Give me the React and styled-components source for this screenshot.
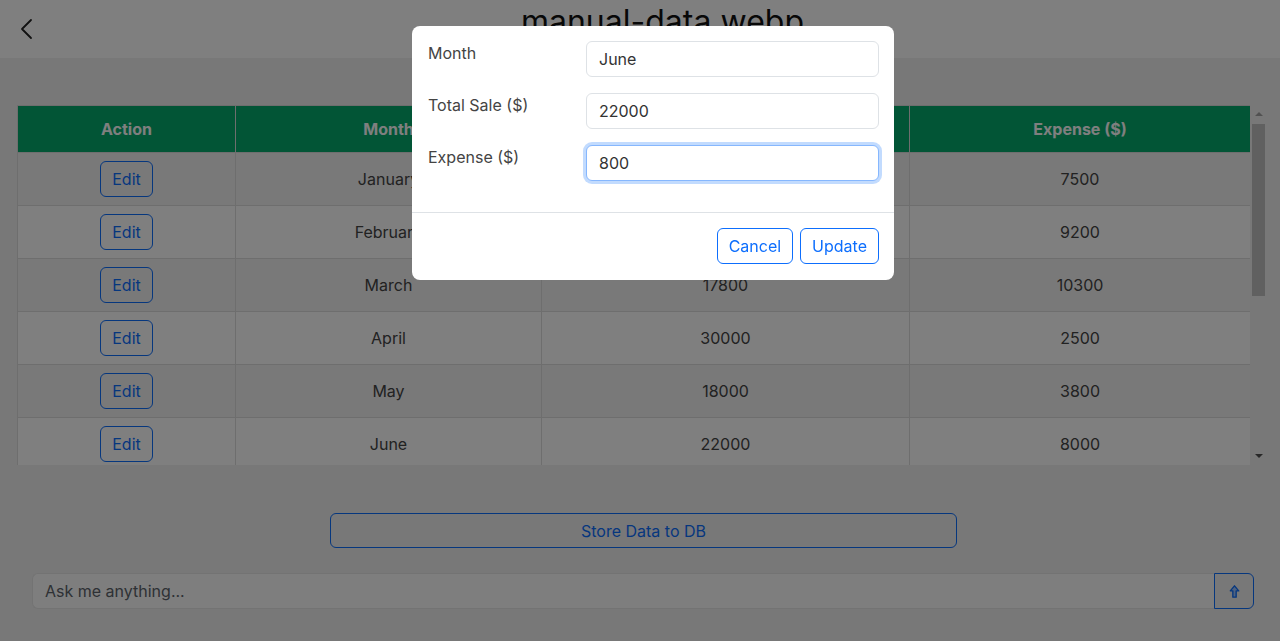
import { useEffect, useRef } from "react";
import styled, { createGlobalStyle } from "styled-components";

const rows = [
  { month: "January", sale: 15000, expense: 7500 },
  { month: "February", sale: 21000, expense: 9200 },
  { month: "March", sale: 17800, expense: 10300 },
  { month: "April", sale: 30000, expense: 2500 },
  { month: "May", sale: 18000, expense: 3800 },
  { month: "June", sale: 22000, expense: 8000 },
  { month: "July", sale: 25000, expense: 6000 },
  { month: "August", sale: 19500, expense: 4200 },
  { month: "September", sale: 27000, expense: 5100 },
  { month: "October", sale: 23000, expense: 7300 },
  { month: "November", sale: 31000, expense: 6900 },
  { month: "December", sale: 35000, expense: 9800 },
];

const fields = [
  { label: "Month", value: "June" },
  { label: "Total Sale ($)", value: "22000" },
  { label: "Expense ($)", value: "800", active: true },
];

// visible part of the table vs. full height, for the scroll thumb
const VIEW_H = 360;
const CONTENT_H = 47 + rows.length * 53;

export default function App() {
  const expenseRef = useRef(null);
  const thumbH = Math.round(((VIEW_H - 34) * VIEW_H) / CONTENT_H);

  useEffect(() => {
    if (expenseRef.current) {
      expenseRef.current.focus();
      expenseRef.current.setSelectionRange(3, 3);
    }
  }, []);

  return (
    <>
      <GlobalStyle />
      <Header>
        <BackButton aria-label="Back">
          <svg width="14" height="22" viewBox="0 0 14 22" fill="none">
            <polyline
              points="11,2 2,11 11,20"
              stroke="#222"
              strokeWidth="1.8"
              strokeLinecap="round"
              strokeLinejoin="round"
            />
          </svg>
        </BackButton>
        <Title>manual-data.webp</Title>
      </Header>

      <Main>
        <TableArea>
          <TableWrap>
            <Table>
              <colgroup>
                <col style={{ width: 218 }} />
                <col style={{ width: 306 }} />
                <col style={{ width: 368 }} />
                <col style={{ width: 341 }} />
              </colgroup>
              <thead>
                <tr>
                  <Th>Action</Th>
                  <Th>Month</Th>
                  <Th>Total Sale ($)</Th>
                  <Th>Expense ($)</Th>
                </tr>
              </thead>
              <tbody>
                {rows.map((r) => (
                  <Tr key={r.month}>
                    <Td>
                      <OutlineButton>Edit</OutlineButton>
                    </Td>
                    <Td>{r.month}</Td>
                    <Td>{r.sale}</Td>
                    <Td>{r.expense}</Td>
                  </Tr>
                ))}
              </tbody>
            </Table>
          </TableWrap>
          <ScrollTrack>
            <ScrollArrow $dir="up" />
            <ScrollThumb style={{ height: thumbH }} />
            <ScrollArrow $dir="down" />
          </ScrollTrack>
        </TableArea>

        <StoreButton>Store Data to DB</StoreButton>

        <ChatBar>
          <ChatInput placeholder="Ask me anything..." />
          <SendButton aria-label="Send">
            <svg width="11" height="15" viewBox="0 0 12 16">
              <path
                d="M6 1.8 L10.6 7.3 H7.8 V14.2 H4.2 V7.3 H1.4 Z"
                fill="#9ec5fe"
                stroke="#0d6efd"
                strokeWidth="1.5"
                strokeLinejoin="round"
              />
            </svg>
          </SendButton>
        </ChatBar>
      </Main>

      <Backdrop />
      <Modal>
        <ModalBody>
          {fields.map((f) => (
            <FieldRow key={f.label}>
              <FieldLabel>{f.label}</FieldLabel>
              <FieldInput
                defaultValue={f.value}
                $active={f.active}
                ref={f.active ? expenseRef : undefined}
              />
            </FieldRow>
          ))}
        </ModalBody>
        <ModalFooter>
          <OutlineButton>Cancel</OutlineButton>
          <OutlineButton>Update</OutlineButton>
        </ModalFooter>
      </Modal>
    </>
  );
}

const GlobalStyle = createGlobalStyle`
  html, body {
    margin: 0;
    height: 100%;
    overflow: hidden;
  }
  body {
    background: #f0f0f0;
    font-family: Inter, "Noto Sans", sans-serif;
    color: #333;
    font-size: 16px;
  }
  * { box-sizing: border-box; }
`;

const Header = styled.header`
  height: 58px;
  background: #fff;
  display: flex;
  align-items: flex-start;
`;

const BackButton = styled.button`
  width: 45px;
  height: 58px;
  border: 0;
  background: transparent;
  padding: 0 0 0 20px;
  display: flex;
  align-items: center;
  justify-content: flex-start;
`;

const Title = styled.h1`
  flex: 1;
  margin: 0;
  padding-top: 2px;
  text-align: center;
  font-size: 32px;
  font-weight: 400;
  color: #111;
`;

const Main = styled.main`
  padding: 47px 10px 0 17px;
  display: flex;
  flex-direction: column;
`;

const TableArea = styled.div`
  display: flex;
  height: ${VIEW_H}px;
  margin-right: 3px;
`;

const TableWrap = styled.div`
  flex: 1;
  overflow: hidden;
`;

const ScrollTrack = styled.div`
  width: 17px;
  flex: none;
  background: #f1f1f1;
  display: flex;
  flex-direction: column;
  justify-content: space-between;
`;

const ScrollArrow = styled.div`
  height: 17px;
  display: flex;
  align-items: center;
  justify-content: center;

  &::before {
    content: "";
    width: 0;
    height: 0;
    border-left: 4px solid transparent;
    border-right: 4px solid transparent;
    ${(p) =>
      p.$dir === "up"
        ? "border-bottom: 4px solid #a3a3a3; margin-top: 1px;"
        : "border-top: 4px solid #505050; margin-bottom: 1px;"}
  }
`;

const ScrollThumb = styled.div`
  margin: 2px 2px 0;
  background: #c1c1c1;
  margin-bottom: auto;
`;

const Table = styled.table`
  width: 1233px;
  border-collapse: collapse;
  table-layout: fixed;
  background: #fff;
`;

const Th = styled.th`
  background: #04aa6d;
  color: #fff;
  font-weight: 700;
  padding: 12px 8px;
  line-height: 22px;
  border: 1px solid #ddd;
  text-align: center;
`;

const Tr = styled.tr`
  &:nth-child(odd) {
    background: #f2f2f2;
  }
`;

const Td = styled.td`
  padding: 8px;
  border: 1px solid #ddd;
  text-align: center;
  line-height: 24px;
  color: #444;
`;

const OutlineButton = styled.button`
  font-family: inherit;
  font-size: 16px;
  line-height: 22px;
  padding: 6px 11px;
  color: #0d6efd;
  background: transparent;
  border: 1px solid #0d6efd;
  border-radius: 6px;
  vertical-align: middle;
`;

const StoreButton = styled(OutlineButton)`
  width: 627px;
  height: 35px;
  padding: 5px 12px;
  margin: 48px auto 0;
`;

const ChatBar = styled.div`
  display: flex;
  margin: 25px 16px 0 15px;
`;

const ChatInput = styled.input`
  flex: 1;
  height: 36px;
  padding: 6px 12px;
  font-family: inherit;
  font-size: 16px;
  color: #212529;
  background: #fdfdfd;
  border: 1px solid #e6e6e6;
  border-right: 0;
  border-radius: 6px 0 0 6px;
  outline: none;

  &::placeholder {
    color: #5c636a;
  }
`;

const SendButton = styled.button`
  width: 40px;
  height: 36px;
  border: 1px solid #0d6efd;
  border-radius: 0 6px 6px 0;
  background: transparent;
  display: flex;
  align-items: center;
  justify-content: center;
  padding: 0;
`;

const Backdrop = styled.div`
  position: fixed;
  inset: 0;
  background: rgba(0, 0, 0, 0.5);
`;

const Modal = styled.div`
  position: fixed;
  top: 26px;
  left: 412px;
  width: 482px;
  background: #fff;
  border-radius: 8px;
  display: flex;
  flex-direction: column;
`;

const ModalBody = styled.div`
  padding: 15px 15px 15px 16px;
  border-bottom: 1px solid #dee2e6;
`;

const FieldRow = styled.div`
  display: grid;
  grid-template-columns: 158px 1fr;
  align-items: start;
  margin-bottom: 16px;
`;

const FieldLabel = styled.label`
  color: #444;
  line-height: 24px;
`;

const FieldInput = styled.input`
  height: 36px;
  padding: 6px 12px;
  font-family: inherit;
  font-size: 16px;
  color: #333;
  background: #fff;
  border: 1px solid ${(p) => (p.$active ? "#86b7fe" : "#dee2e6")};
  border-radius: 6px;
  outline: none;
  box-shadow: ${(p) => (p.$active ? "0 0 0 3px rgba(13, 110, 253, 0.25)" : "none")};
`;

const ModalFooter = styled.div`
  display: flex;
  justify-content: flex-end;
  gap: 7px;
  padding: 15px 15px 16px;
`;
